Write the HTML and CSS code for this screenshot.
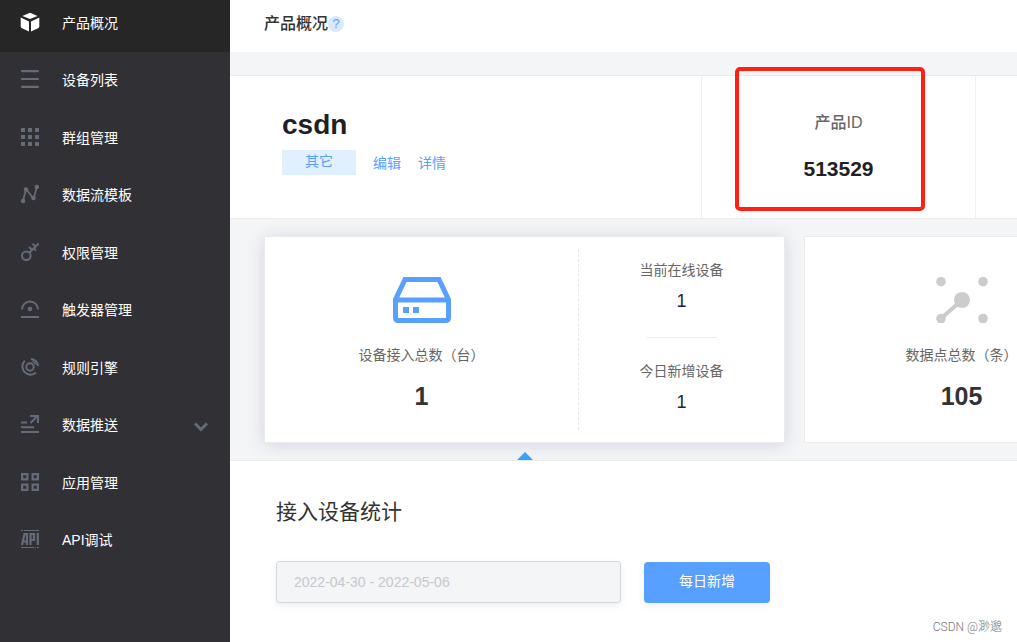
FILE: index.html
```html
<!DOCTYPE html>
<html lang="zh-CN">
<head>
<meta charset="utf-8">
<meta name="viewport" content="width=device-width, initial-scale=1">
<title>产品概况</title>
<link rel="stylesheet" href="styles.css">
</head>
<body>
<div class="app">
  <nav class="sidebar">
    <ul class="menu">
      <li class="menu-row active"><a class="menu-link" href="#">
        <svg class="icon" viewBox="0 0 20 20" fill="currentColor"><path d="M10 .8 17.6 3.9 10 7.1 2.4 3.9zM.7 5.5 9 9.4v10L2 16.2Q.7 15.6.7 14.2zM19.3 5.5 11 9.4v10l7-3.2q1.300-.6 1.300-2z"/></svg>
        <span>产品概况</span></a></li>
      <li class="menu-row"><a class="menu-link" href="#">
        <svg class="icon" viewBox="0 0 20 20" stroke="currentColor" stroke-width="2.200" stroke-linecap="round"><path d="M2 2.200h16M2 10h16M2 17.800h16"/></svg>
        <span>设备列表</span></a></li>
      <li class="menu-row"><a class="menu-link" href="#">
        <svg class="icon" viewBox="0 0 20 20" fill="currentColor"><path d="M1 1h4v4H1zM8 1h4v4H8zM15 1h4v4h-4zM1 8h4v4H1zM8 8h4v4H8zM15 8h4v4h-4zM1 15h4v4H1zM8 15h4v4H8zM15 15h4v4h-4z"/></svg>
        <span>群组管理</span></a></li>
      <li class="menu-row"><a class="menu-link" href="#">
        <svg class="icon" viewBox="0 0 20 20" fill="currentColor"><path d="M3 17 6 5l7.500 9.500L17 3" fill="none" stroke="currentColor" stroke-width="1.800"/><circle cx="3" cy="17" r="2.300"/><circle cx="6" cy="5.500" r="2.300"/><circle cx="13.500" cy="14" r="2.300"/><circle cx="16.800" cy="3" r="2.300"/></svg>
        <span>数据流模板</span></a></li>
      <li class="menu-row"><a class="menu-link" href="#">
        <svg class="icon" viewBox="0 0 20 20" fill="none" stroke="currentColor" stroke-width="2"><circle cx="6.300" cy="13.700" r="4.300"/><path d="M9.300 10.700 18.700 1.500M12 8 9 5M15.500 4.600 12.500 1.600M13.800 6.300l2.200 2.200"/></svg>
        <span>权限管理</span></a></li>
      <li class="menu-row"><a class="menu-link" href="#">
        <svg class="icon" viewBox="0 0 20 20" fill="none" stroke="currentColor" stroke-width="2"><path d="M2 10.500a8 8 0 0 1 16 0M1 18h18"/><circle cx="10" cy="10" r="2.300" fill="currentColor" stroke="none"/></svg>
        <span>触发器管理</span></a></li>
      <li class="menu-row"><a class="menu-link" href="#">
        <svg class="icon" viewBox="0 0 20 20" fill="none" stroke="currentColor" stroke-width="2"><circle cx="10" cy="10" r="3.700"/><path d="M4.800 3.800A8.100 8.100 0 0 0 16 15.500M11 2A8.100 8.100 0 0 1 18 9"/><path d="M12.500 4.400A6 6 0 0 1 15.600 7.500" stroke-width="1.400"/></svg>
        <span>规则引擎</span></a></li>
      <li class="menu-row"><a class="menu-link" href="#">
        <svg class="icon" viewBox="0 0 20 20" fill="none" stroke="currentColor" stroke-width="2"><path d="M1 8.500h6M1 13.300h13M1 18h18M10.500 9 17.500 2M10 2h8v7"/></svg>
        <span>数据推送</span>
        <svg class="chevron" viewBox="0 0 14 10" fill="none" stroke="currentColor" stroke-width="3"><path d="M1 1.500 7 7.500 13 1.500"/></svg></a></li>
      <li class="menu-row"><a class="menu-link" href="#">
        <svg class="icon" viewBox="0 0 20 20" fill="none" stroke="currentColor" stroke-width="2.200"><path d="M2.100 2.100h5.300v5.300H2.100zM12.600 2.100h5.300v5.300h-5.300zM2.100 12.600h5.300v5.300H2.100zM12.600 12.600h5.300v5.300h-5.300z"/></svg>
        <span>应用管理</span></a></li>
      <li class="menu-row"><a class="menu-link" href="#">
        <svg class="icon" viewBox="0 0 20 20" fill="none" stroke="currentColor"><path d="M1 1.500h2M4 1.500h15M1 18.500h13M15 18.500h1M17 18.500h2"/><path d="M2 16 4.500 5H7v11M3 12.500h4M10.500 16V5H14v6h-3.500M17.800 4v12" stroke-width="2.200"/></svg>
        <span>API调试</span></a></li>
    </ul>
  </nav>

  <main class="main">
    <header class="topbar">
      <h1 class="page-title">产品概况</h1>
      <button class="help" type="button" aria-label="帮助">?</button>
    </header>

    <section class="product">
      <div class="product-info">
        <h2 class="product-name">csdn</h2>
        <div class="product-meta">
          <span class="tag">其它</span>
          <a class="link" href="#">编辑</a>
          <a class="link" href="#">详情</a>
        </div>
      </div>
      <div class="product-id">
        <span class="id-label">产品ID</span>
        <strong class="id-value">513529</strong>
        <div class="highlight"></div>
      </div>
      <div class="product-rest"></div>
    </section>

    <section class="cards">
      <article class="card selected">
        <div class="total">
          <svg class="total-icon device" viewBox="0 0 58 46" fill="none" stroke="currentColor" stroke-width="5"><path d="M2.500 22.500 12 2.500H46L55.500 22.500V40.500Q55.500 43.500 52.500 43.500H5.500Q2.500 43.500 2.500 40.500ZM2.500 23H55.500"/><path d="M10 33h6M20 33h6" stroke-width="6"/></svg>
          <span class="label">设备接入总数（台）</span>
          <strong class="total-value">1</strong>
        </div>
        <div class="details">
          <div class="detail"><span class="label">当前在线设备</span><span class="detail-value">1</span></div>
          <div class="detail"><span class="label">今日新增设备</span><span class="detail-value">1</span></div>
        </div>
      </article>
      <article class="card">
        <div class="total">
          <svg class="total-icon points" viewBox="0 0 58 46" fill="currentColor"><circle cx="8" cy="4.700" r="4.800"/><circle cx="50" cy="4.700" r="4.800"/><circle cx="8" cy="41.500" r="4.800"/><circle cx="50" cy="41.500" r="4.800"/><circle cx="29" cy="23" r="8"/><path d="M8 41.500 29 23" stroke="currentColor" stroke-width="4"/></svg>
          <span class="label">数据点总数（条）</span>
          <strong class="total-value">105</strong>
        </div>
        <div class="details"></div>
      </article>
    </section>

    <section class="stats">
      <h2 class="stats-title">接入设备统计</h2>
      <form class="filters">
        <input class="date-range" type="text" aria-label="日期范围" value="2022-04-30 - 2022-05-06" disabled>
        <button class="primary" type="button">每日新增</button>
      </form>
      <span class="watermark">CSDN @渺邈</span>
    </section>
  </main>
</div>
</body>
</html>
```
FILE: styles.css
```css
* {
  box-sizing: border-box;
}

body {
  margin: 0;
  font: 14px/20px "Liberation Sans", "Noto Sans CJK SC", sans-serif;
  color: #333;
  background: #fff;
}

h1, h2, ul {
  margin: 0;
  padding: 0;
}

a {
  text-decoration: none;
}

button, input {
  font: inherit;
}

.app {
  display: flex;
  min-height: 100vh;
  overflow: hidden;
}

/* Sidebar */
.sidebar {
  flex: 0 0 230px;
  background: #313035;
}

.menu {
  display: grid;
  grid-auto-rows: 1fr;
  height: 575px;
  margin-top: -6px;
  list-style: none;
}

.menu-row.active {
  background: #262626;
}

.menu-link {
  display: flex;
  align-items: center;
  gap: 22px;
  height: 100%;
  padding: 0 22px 0 20px;
  color: #fff;
}

.icon {
  width: 20px;
  height: 20px;
  margin-bottom: 2px;
  color: #656b79;
}

.active .icon {
  color: #fff;
}

.chevron {
  width: 14px;
  height: 10px;
  margin-top: 4px;
  margin-left: auto;
  color: #656b79;
}

/* Main column */
.main {
  display: flex;
  flex: 1;
  flex-direction: column;
  min-width: 0;
  background: #f4f5f7;
}

.topbar {
  display: flex;
  align-items: center;
  height: 52px;
  padding: 0 34px 4px;
  background: #fff;
}

.page-title {
  font-size: 16px;
  font-weight: 500;
}

.help {
  width: 16px;
  height: 16px;
  padding: 0;
  border: 0;
  border-radius: 50%;
  background: #d9e9ff;
  color: #57a0ff;
  font-size: 13px;
  line-height: 16px;
}

/* Product summary */
.product {
  display: flex;
  height: 144px;
  margin-top: 23px;
  border: solid #ebebeb;
  border-width: 1px 0;
  background: #fff;
}

.product-info {
  flex: 1;
  padding: 32px 52px;
}

.product-name {
  font-size: 28px;
  line-height: 34px;
  color: #1f1f26;
}

.product-meta {
  display: flex;
  align-items: center;
  gap: 17px;
  margin-top: 8px;
}

.tag {
  width: 74px;
  height: 25px;
  background: #e1f0ff;
  color: #57a0ff;
  line-height: 23px;
  text-align: center;
}

.link {
  color: #57a0ff;
}

.product-id {
  position: relative;
  display: flex;
  flex: 0 0 275px;
  flex-direction: column;
  align-items: center;
  gap: 24px;
  padding-top: 37px;
  border: solid #f0f0f0;
  border-width: 0 1px;
}

.id-label {
  font-size: 16px;
  font-weight: 500;
  color: #666;
}

.id-value {
  font-size: 21px;
  line-height: 24px;
  color: #1f1f26;
}

.highlight {
  position: absolute;
  inset: -9px 50px 7px 33px;
  border: 4px solid #ff2015;
  border-radius: 5px;
}

.product-rest {
  flex: 0 0 41px;
}

/* Totals */
.cards {
  display: flex;
  gap: 19px;
  padding: 17px 0 17px 34px;
}

.card {
  display: flex;
  flex: 0 0 521px;
  height: 207px;
  padding: 12px 0;
  border: 1px solid #ebebeb;
  background: #fff;
}

.card.selected {
  position: relative;
  box-shadow: 0 2px 16px rgba(90, 105, 150, 0.22);
}

.selected::after {
  content: "";
  position: absolute;
  top: 215px;
  left: 251px;
  border: solid transparent;
  border-width: 0 9px 9px;
  border-bottom-color: #3ba1ff;
}

.total {
  display: flex;
  flex: 0 0 314px;
  flex-direction: column;
  align-items: center;
  padding-top: 28px;
  border-right: 1px dashed #e8e8e8;
}

.total-icon {
  width: 58px;
  height: 46px;
}

.device {
  color: #57a0ff;
}

.points {
  color: #ccc;
}

.label {
  color: #666;
}

.total .label {
  margin-top: 22px;
}

.total-value {
  margin-top: 16px;
  font-size: 25px;
  line-height: 30px;
}

.details {
  display: flex;
  flex: 1;
  flex-direction: column;
}

.detail {
  display: flex;
  flex-direction: column;
  align-items: center;
  gap: 11px;
  width: 70px;
  margin: 0 auto;
  padding: 11px 0 26px;
  white-space: nowrap;
}

.detail + .detail {
  padding-top: 23px;
  border-top: 1px solid #ebebeb;
}

.detail-value {
  font-size: 18px;
  color: #1f1f46;
}

/* Statistics */
.stats {
  position: relative;
  flex: 1;
  padding: 36px 46px;
  border-top: 1px solid #ebebeb;
  background: #fff;
}

.stats-title {
  font-size: 21px;
  font-weight: 400;
  line-height: 30px;
}

.filters {
  display: flex;
  align-items: center;
  gap: 23px;
  margin-top: 34px;
}

.date-range {
  flex: 0 0 345px;
  height: 42px;
  padding: 0 17px;
  border: 1px solid #d6d9dc;
  border-radius: 3px;
  background: #f4f5f7;
  box-shadow: 0 3px 6px rgba(90, 105, 150, 0.1);
  color: #c5c8cd;
}

.primary {
  width: 126px;
  height: 41px;
  padding: 0 0 3px;
  border: 0;
  border-radius: 4px;
  background: #57a0ff;
  box-shadow: 0 3px 6px rgba(90, 105, 150, 0.1);
  color: #fff;
}

.watermark {
  position: absolute;
  right: 15px;
  bottom: 5px;
  font-family: Roboto, "Noto Sans CJK SC", sans-serif;
  font-size: 12px;
  font-weight: 300;
  color: #777;
}
```
